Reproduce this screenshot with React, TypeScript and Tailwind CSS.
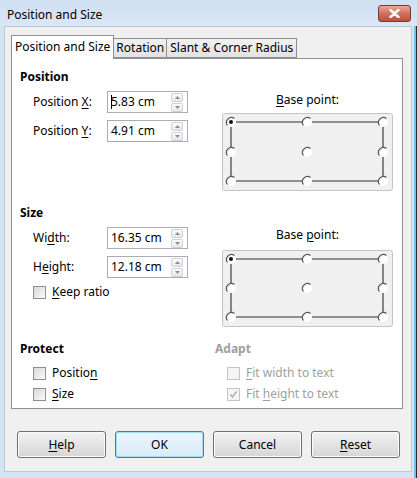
import React from "react";

const U = ({ children }: { children: React.ReactNode }) => (
  <span className="underline decoration-[1px] underline-offset-[2px]">{children}</span>
);

const SpinBtn = ({ up }: { up?: boolean }) => (
  <div className="flex h-[9px] w-[12px] items-center justify-center rounded-[2px] border border-[#cfd3d8] bg-gradient-to-b from-[#fbfbfb] to-[#e6e8eb]">
    <svg width="5" height="3" viewBox="0 0 5 3">
      {up ? <path d="M0 3 L2.5 0 L5 3 Z" fill="#8a9099" /> : <path d="M0 0 L2.5 3 L5 0 Z" fill="#8a9099" />}
    </svg>
  </div>
);

const SpinField = ({ value, caret }: { value: string; caret?: boolean }) => (
  <div className="flex h-[22px] w-[81px] items-center border border-[#abadb3] bg-white pl-[3px] pr-[4px]">
    <span className="relative flex-1 text-[12px] leading-[16px] text-black">
      {caret && <span className="absolute left-0 top-[1px] h-[14px] w-px bg-black" />}
      {value}
    </span>
    <div className="flex flex-col gap-px">
      <SpinBtn up />
      <SpinBtn />
    </div>
  </div>
);

const Row = ({ label, value, caret }: { label: React.ReactNode; value: string; caret?: boolean }) => (
  <div className="flex items-center pl-[13px]">
    <span className="w-[74px] text-[12px] leading-[16px] text-black">{label}</span>
    <SpinField value={value} caret={caret} />
  </div>
);

const Check = ({ checked, disabled, label }: { checked?: boolean; disabled?: boolean; label: React.ReactNode }) => (
  <div className="flex h-[16px] items-center gap-[6px]">
    <div
      className={
        disabled
          ? "flex h-[13px] w-[13px] items-center justify-center border border-[#c4c4c4] bg-[#f4f4f4]"
          : "flex h-[13px] w-[13px] items-center justify-center border border-[#8f8f8f] bg-gradient-to-br from-[#d8d8d8] to-[#fbfbfb]"
      }
    >
      {checked && (
        <svg width="9" height="9" viewBox="0 0 9 9">
          <path d="M1.5 4.5 L3.5 7 L7.5 1.5" stroke="#a8a8a8" strokeWidth="1.3" fill="none" />
        </svg>
      )}
    </div>
    <span className={disabled ? "text-[12px] leading-[16px] text-[#a0a0a0]" : "text-[12px] leading-[16px] text-black"}>
      {label}
    </span>
  </div>
);

const Radio = ({ x, y, selected }: { x: number; y: number; selected?: boolean }) => (
  <g>
    <circle cx={x} cy={y} r={5} fill="#fff" />
    <path d={`M${x + 3.5} ${y - 3.5} A5 5 0 0 0 ${x - 3.5} ${y + 3.5}`} stroke="#555" strokeWidth="1.2" fill="none" />
    {selected && <circle cx={x} cy={y} r={2} fill="#111" />}
  </g>
);

const BasePoint = ({ h }: { h: number }) => {
  const top = 9;
  const bot = h - 10;
  const mid = Math.round((top + bot) / 2);
  const xs = [9, 85, 161];
  return (
    <svg width="171" height={h} viewBox={`0 0 171 ${h}`} className="block">
      <rect x="0.5" y="0.5" width="170" height={h - 1} rx="2" fill="#f0f0f0" stroke="#c4c4c4" />
      <path d={`M${xs[0]} ${top} H${xs[2]} V${bot} H${xs[0]} Z`} stroke="#2e2e2e" strokeWidth="1.1" fill="none" />
      {[top, mid, bot].map((y) =>
        xs.map((x) => <Radio key={`${x}-${y}`} x={x} y={y} selected={x === xs[0] && y === top} />)
      )}
    </svg>
  );
};

export default function App() {
  return (
    <div className="flex h-[478px] w-[417px] flex-col bg-[#d5e4f4] font-['Noto_Sans',sans-serif] shadow-[inset_-1px_0_0_#1d2b3a,inset_-3px_0_0_#74c3e6]">
      {/* title bar */}
      <div className="flex h-[26px] items-center justify-between bg-gradient-to-b from-[#d0e0f2] to-[#d9e7f6] pl-[7px] pr-[6px]">
        <span className="pt-[3px] text-[12px] leading-[16px] text-black">Position and Size</span>
        <div className="mt-[1px] flex h-[17px] w-[33px] items-center justify-center rounded-[3px] border border-[#6b3f3a] bg-gradient-to-b from-[#e8a99b] via-[#d0705f] to-[#c34d3a]">
          <svg width="11" height="9" viewBox="0 0 11 9">
            <path d="M1.5 1 L9.5 8 M9.5 1 L1.5 8" stroke="#fff" strokeWidth="2.4" strokeLinecap="round" />
          </svg>
        </div>
      </div>

      {/* client */}
      <div className="ml-[4px] mr-[5px] mb-[6px] flex flex-1 flex-col border border-[#b9c9da] bg-[#f0f0f0] pl-[6px] pt-[8px]">
        {/* tabs */}
        <div className="flex items-end">
          <div className="relative z-10 -mb-px flex h-[24px] items-start border border-b-0 border-[#8e8f8f] bg-white px-[3px] pt-[3px] text-[12px] leading-[16px] text-black">
            Position and Size
          </div>
          <div className="flex h-[20px] items-start border border-l-0 border-[#8e8f8f] bg-gradient-to-b from-[#f2f2f2] to-[#e2e2e2] px-[2px] pt-[1px] text-[12px] leading-[16px] text-black">
            Rotation
          </div>
          <div className="flex h-[20px] items-start border border-l-0 border-[#8e8f8f] bg-gradient-to-b from-[#f2f2f2] to-[#e2e2e2] px-[3px] pt-[1px] text-[12px] leading-[16px] text-black">
            Slant &amp; Corner Radius
          </div>
        </div>

        {/* panel */}
        <div className="flex h-[351px] w-[392px] flex-col border border-[#8e8f8f] bg-white px-[8px] pt-[10px]">
          {/* Position */}
          <div className="text-[12px] font-bold leading-[16px] text-black">Position</div>
          <div className="mt-[6px] flex">
            <div className="flex w-[202px] flex-col gap-[7px]">
              <Row label={<>Position <U>X</U>:</>} value="5.83 cm" caret />
              <Row label={<>Position <U>Y</U>:</>} value="4.91 cm" />
            </div>
            <div className="mt-px flex flex-col items-center">
              <span className="text-[12px] leading-[16px] text-black">
                <U>B</U>ase point:
              </span>
              <div className="mt-[5px]">
                <BasePoint h={78} />
              </div>
            </div>
          </div>

          {/* Size */}
          <div className="mt-[14px] text-[12px] font-bold leading-[16px] text-black">Size</div>
          <div className="mt-[6px] flex">
            <div className="flex w-[202px] flex-col gap-[7px]">
              <Row label={<>Wi<U>d</U>th:</>} value="16.35 cm" />
              <Row label={<>H<U>e</U>ight:</>} value="12.18 cm" />
              <div className="-mt-px pl-[13px]">
                <Check label={<><U>K</U>eep ratio</>} />
              </div>
            </div>
            <div className="flex flex-col items-center">
              <span className="text-[12px] leading-[16px] text-black">
                Base <U>p</U>oint:
              </span>
              <div className="mt-[7px]">
                <BasePoint h={77} />
              </div>
            </div>
          </div>

          {/* Protect / Adapt */}
          <div className="mt-[14px] flex">
            <div className="flex w-[195px] flex-col">
              <div className="text-[12px] font-bold leading-[16px] text-black">Protect</div>
              <div className="mt-[8px] flex flex-col gap-[5px] pl-[13px]">
                <Check label={<>Positio<U>n</U></>} />
                <Check label={<><U>S</U>ize</>} />
              </div>
            </div>
            <div className="flex flex-col">
              <div className="text-[12px] font-bold leading-[16px] text-[#a0a0a0]">Adapt</div>
              <div className="mt-[8px] flex flex-col gap-[5px] pl-[12px]">
                <Check disabled label={<><U>F</U>it width to text</>} />
                <Check disabled checked label={<>Fit <U>h</U>eight to text</>} />
              </div>
            </div>
          </div>
        </div>

        {/* buttons */}
        <div className="mt-[22px] flex gap-[9px] pl-[6px]">
          {[
            { t: <><U>H</U>elp</>, k: "help" },
            { t: <>OK</>, k: "ok" },
            { t: <>Cancel</>, k: "cancel" },
            { t: <><U>R</U>eset</>, k: "reset" },
          ].map((b) => (
            <div
              key={b.k}
              className={
                b.k === "ok"
                  ? "flex h-[27px] w-[89px] items-center justify-center rounded-[3px] border border-[#3c7fb1] bg-gradient-to-b from-[#eaf6fd] to-[#d9ecf7] text-[12px] leading-[16px] text-black shadow-[inset_0_0_0_1px_#a6dcf5]"
                  : "flex h-[27px] w-[89px] items-center justify-center rounded-[3px] border border-[#707070] bg-gradient-to-b from-[#f2f2f2] to-[#d6d6d6] text-[12px] leading-[16px] text-black shadow-[inset_0_0_0_1px_#fcfcfc]"
              }
            >
              {b.t}
            </div>
          ))}
        </div>
      </div>
    </div>
  );
}
